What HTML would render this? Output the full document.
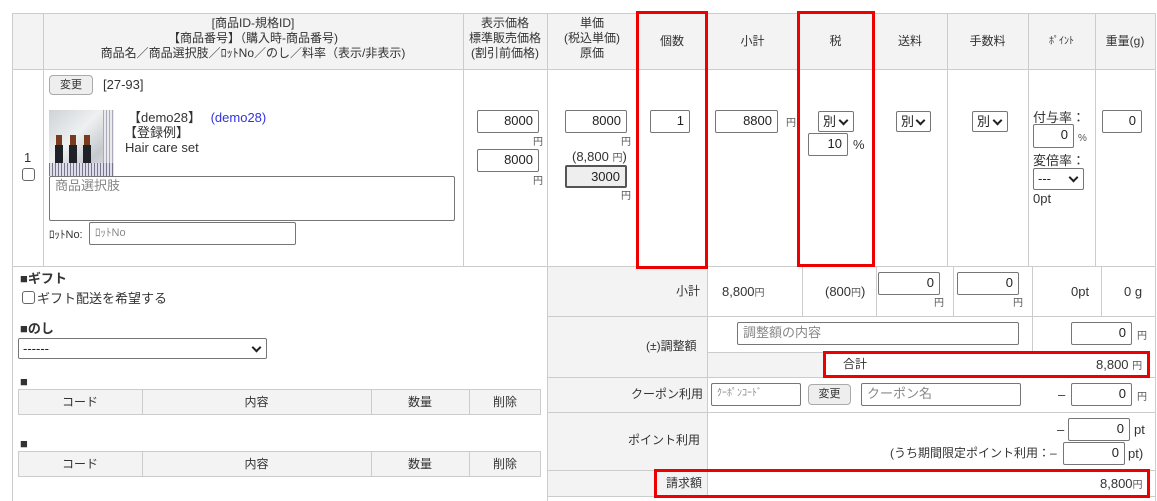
<!DOCTYPE html>
<html><head><meta charset="utf-8"><style>
*{box-sizing:border-box;margin:0;padding:0}
body{width:1157px;height:501px;background:#fff;position:relative;overflow:hidden;font-family:"Liberation Sans","Noto Sans CJK JP",sans-serif;font-size:13px;color:#333}
.a{position:absolute}
.h{position:absolute;background:#ccc}
.hd{position:absolute;background:#f2f3f2}
.t{position:absolute;white-space:nowrap;line-height:15px}
.hh{font-size:12px}
.i{position:absolute;border:1px solid #767676;border-radius:2px;background:#fff;text-align:right;padding-right:5px;font-size:13px;line-height:20px;color:#222}
.s{position:absolute;border:1px solid #767676;border-radius:2px;background:#fff;font-size:13px;line-height:19px;padding-left:4px;color:#222}
.s:after{content:"";position:absolute;right:6px;top:5px;width:5px;height:5px;border-right:2px solid #222;border-bottom:2px solid #222;transform:rotate(45deg)}
.c{text-align:center}
.r{position:absolute;border:3px solid #e00}
.y{font-size:10px;color:#555}
.ph{color:#888;text-align:left;padding-left:5px}
.cb{position:absolute;width:13px;height:13px;border:1px solid #666;border-radius:3px;background:#fff}
.btn{position:absolute;border:1px solid #aaa;border-radius:4px;background:#eee;text-align:center;font-size:11px;line-height:18px}
</style></head><body>
<div class="hd" style="left:12px;top:13px;width:1143px;height:56px"></div>
<div class="hd" style="left:547px;top:266px;width:160px;height:230px"></div>
<div class="hd" style="left:707px;top:352px;width:116px;height:25px"></div>
<div class="hd" style="left:18px;top:389px;width:523px;height:25px"></div>
<div class="hd" style="left:18px;top:451px;width:523px;height:25px"></div>
<div class="h" style="left:12px;top:13px;width:1143px;height:1px"></div>
<div class="h" style="left:12px;top:69px;width:1143px;height:1px"></div>
<div class="h" style="left:12px;top:266px;width:1143px;height:1px"></div>
<div class="h" style="left:547px;top:316px;width:608px;height:1px"></div>
<div class="h" style="left:707px;top:352px;width:325px;height:1px"></div>
<div class="h" style="left:547px;top:377px;width:608px;height:1px"></div>
<div class="h" style="left:547px;top:412px;width:608px;height:1px"></div>
<div class="h" style="left:547px;top:470px;width:608px;height:1px"></div>
<div class="h" style="left:547px;top:496px;width:608px;height:1px"></div>
<div class="h" style="left:12px;top:13px;width:1px;height:488px"></div>
<div class="h" style="left:43px;top:13px;width:1px;height:253px"></div>
<div class="h" style="left:463px;top:13px;width:1px;height:253px"></div>
<div class="h" style="left:547px;top:13px;width:1px;height:488px"></div>
<div class="h" style="left:637px;top:13px;width:1px;height:253px"></div>
<div class="h" style="left:707px;top:13px;width:1px;height:253px"></div>
<div class="h" style="left:798px;top:13px;width:1px;height:253px"></div>
<div class="h" style="left:873px;top:13px;width:1px;height:253px"></div>
<div class="h" style="left:947px;top:13px;width:1px;height:253px"></div>
<div class="h" style="left:1028px;top:13px;width:1px;height:253px"></div>
<div class="h" style="left:1095px;top:13px;width:1px;height:253px"></div>
<div class="h" style="left:1155px;top:13px;width:1px;height:488px"></div>
<div class="h" style="left:707px;top:266px;width:1px;height:230px"></div>
<div class="h" style="left:802px;top:266px;width:1px;height:50px"></div>
<div class="h" style="left:876px;top:266px;width:1px;height:50px"></div>
<div class="h" style="left:953px;top:266px;width:1px;height:50px"></div>
<div class="h" style="left:1032px;top:266px;width:1px;height:86px"></div>
<div class="h" style="left:1101px;top:266px;width:1px;height:50px"></div>
<div class="h" style="left:823px;top:352px;width:1px;height:25px"></div>
<div class="t c hh" style="left:43px;top:16px;width:420px">[商品ID-規格ID]<br>【商品番号】（購入時-商品番号)<br>商品名／商品選択肢／ﾛｯﾄNo／のし／料率（表示/非表示)</div>
<div class="t c hh" style="left:463px;top:16px;width:84px">表示価格<br>標準販売価格<br>(割引前価格)</div>
<div class="t c hh" style="left:547px;top:16px;width:90px">単価<br>(税込単価)<br>原価</div>
<div class="t c hh" style="left:637px;top:34px;width:70px">個数</div>
<div class="t c hh" style="left:707px;top:34px;width:91px">小計</div>
<div class="t c hh" style="left:798px;top:34px;width:75px">税</div>
<div class="t c hh" style="left:873px;top:34px;width:74px">送料</div>
<div class="t c hh" style="left:947px;top:34px;width:81px">手数料</div>
<div class="t c" style="left:1028px;top:34px;width:67px;font-size:10px">ﾎﾟｲﾝﾄ</div>
<div class="t c hh" style="left:1095px;top:34px;width:60px">重量(g)</div>
<div class="t" style="left:24px;top:150px">1</div>
<div class="cb" style="left:22px;top:168px"></div>
<div class="btn" style="left:49px;top:75px;width:44px;height:20px">変更</div>
<div class="t" style="left:103px;top:77px">[27-93]</div>
<div class="a" style="left:49px;top:110px;width:65px;height:66px;background:linear-gradient(135deg,#cfd3d6,#eef0f1 40%,#c5c9cc 70%,#e3e5e7)"></div>
<div class="a" style="left:103px;top:110px;width:11px;height:66px;background:repeating-linear-gradient(90deg,#aab 0 1px,#e8eaec 1px 3px)"></div>
<div class="a" style="left:49px;top:163px;width:65px;height:13px;background:repeating-linear-gradient(90deg,#778 0 1px,#dde 1px 3px)"></div>
<div class="a" style="left:55px;top:145px;width:8px;height:18px;background:#1e2226"></div>
<div class="a" style="left:69px;top:145px;width:8px;height:18px;background:#1e2226"></div>
<div class="a" style="left:83px;top:145px;width:8px;height:18px;background:#1e2226"></div>
<div class="a" style="left:56px;top:135px;width:6px;height:10px;background:#7a3a1c"></div>
<div class="a" style="left:70px;top:135px;width:6px;height:10px;background:#7a3a1c"></div>
<div class="a" style="left:84px;top:135px;width:6px;height:10px;background:#7a3a1c"></div>
<div class="t" style="left:128px;top:110px">【demo28】 <span style="color:#3333dd;margin-left:6px">(demo28)</span></div>
<div class="t" style="left:124px;top:125px">【登録例】</div>
<div class="t" style="left:125px;top:140px">Hair care set</div>
<div class="i ph" style="left:49px;top:176px;width:406px;height:45px;line-height:18px">商品選択肢</div>
<div class="t" style="left:49px;top:228px;font-size:11px">ﾛｯﾄNo:</div>
<div class="i ph" style="left:89px;top:222px;width:207px;height:23px;font-size:11px">ﾛｯﾄNo</div>
<div class="i" style="left:477px;top:110px;width:62px;height:23px">8000</div>
<div class="t y" style="left:533px;top:135px">円</div>
<div class="i" style="left:477px;top:149px;width:62px;height:23px">8000</div>
<div class="t y" style="left:533px;top:174px">円</div>
<div class="i" style="left:565px;top:110px;width:62px;height:23px">8000</div>
<div class="t y" style="left:621px;top:135px">円</div>
<div class="t" style="left:572px;top:149px">(8,800 <span class="y">円</span>)</div>
<div class="i" style="left:565px;top:165px;width:62px;height:23px;border:2px solid #555;background:#eee">3000</div>
<div class="t y" style="left:621px;top:189px">円</div>
<div class="i" style="left:650px;top:110px;width:40px;height:23px">1</div>
<div class="i" style="left:715px;top:110px;width:63px;height:23px">8800</div>
<div class="t y" style="left:786px;top:116px">円</div>
<div class="s" style="left:818px;top:111px;width:36px;height:21px">別</div>
<div class="i" style="left:808px;top:133px;width:40px;height:23px">10</div>
<div class="t" style="left:853px;top:137px">%</div>
<div class="s" style="left:896px;top:111px;width:35px;height:21px">別</div>
<div class="s" style="left:972px;top:111px;width:36px;height:21px">別</div>
<div class="t" style="left:1033px;top:110px">付与率：</div>
<div class="i" style="left:1033px;top:124px;width:41px;height:24px">0</div>
<div class="t y" style="left:1078px;top:131px">%</div>
<div class="t" style="left:1033px;top:153px">変倍率：</div>
<div class="s" style="left:1033px;top:168px;width:51px;height:22px">---</div>
<div class="t" style="left:1033px;top:191px">0pt</div>
<div class="i" style="left:1102px;top:110px;width:40px;height:23px">0</div>
<div class="t" style="left:20px;top:271px;font-weight:bold">■ギフト</div>
<div class="cb" style="left:22px;top:291px"></div>
<div class="t" style="left:37px;top:291px">ギフト配送を希望する</div>
<div class="t" style="left:20px;top:321px;font-weight:bold">■のし</div>
<div class="s" style="left:18px;top:338px;width:249px;height:21px">------</div>
<div class="t" style="left:20px;top:374px;font-weight:bold">■</div>
<div class="a" style="left:18px;top:389px;width:523px;height:26px;border:1px solid #ccc"></div>
<div class="h" style="left:142px;top:389px;width:1px;height:26px"></div>
<div class="h" style="left:371px;top:389px;width:1px;height:26px"></div>
<div class="h" style="left:469px;top:389px;width:1px;height:26px"></div>
<div class="t c hh" style="left:18px;top:395px;width:124px">コード</div>
<div class="t c hh" style="left:142px;top:395px;width:229px">内容</div>
<div class="t c hh" style="left:371px;top:395px;width:98px">数量</div>
<div class="t c hh" style="left:469px;top:395px;width:72px">削除</div>
<div class="t" style="left:20px;top:436px;font-weight:bold">■</div>
<div class="a" style="left:18px;top:451px;width:523px;height:26px;border:1px solid #ccc"></div>
<div class="h" style="left:142px;top:451px;width:1px;height:26px"></div>
<div class="h" style="left:371px;top:451px;width:1px;height:26px"></div>
<div class="h" style="left:469px;top:451px;width:1px;height:26px"></div>
<div class="t c hh" style="left:18px;top:457px;width:124px">コード</div>
<div class="t c hh" style="left:142px;top:457px;width:229px">内容</div>
<div class="t c hh" style="left:371px;top:457px;width:98px">数量</div>
<div class="t c hh" style="left:469px;top:457px;width:72px">削除</div>
<div class="t hh" style="left:676px;top:284px">小計</div>
<div class="t" style="left:722px;top:284px">8,800<span class="y">円</span></div>
<div class="t" style="left:825px;top:284px">(800<span class="y">円</span>)</div>
<div class="i" style="left:878px;top:272px;width:62px;height:23px">0</div>
<div class="t y" style="left:934px;top:296px">円</div>
<div class="i" style="left:957px;top:272px;width:62px;height:23px">0</div>
<div class="t y" style="left:1013px;top:296px">円</div>
<div class="t" style="left:1071px;top:284px">0pt</div>
<div class="t" style="left:1124px;top:284px">0 g</div>
<div class="t hh" style="left:646px;top:339px">(±)調整額</div>
<div class="i ph" style="left:737px;top:322px;width:282px;height:23px">調整額の内容</div>
<div class="i" style="left:1071px;top:322px;width:61px;height:23px">0</div>
<div class="t y" style="left:1137px;top:329px">円</div>
<div class="t hh" style="left:843px;top:357px">合計</div>
<div class="t" style="left:1096px;top:357px">8,800 <span class="y">円</span></div>
<div class="t hh" style="left:631px;top:387px">クーポン利用</div>
<div class="i ph" style="left:711px;top:383px;width:90px;height:23px;font-size:10px">ｸｰﾎﾟﾝｺｰﾄﾞ</div>
<div class="btn" style="left:808px;top:384px;width:43px;height:21px;line-height:19px">変更</div>
<div class="i ph" style="left:861px;top:383px;width:160px;height:23px">クーポン名</div>
<div class="t" style="left:1058px;top:387px">–</div>
<div class="i" style="left:1071px;top:383px;width:61px;height:23px">0</div>
<div class="t y" style="left:1137px;top:390px">円</div>
<div class="t hh" style="left:628px;top:433px">ポイント利用</div>
<div class="t" style="left:1057px;top:422px">–</div>
<div class="i" style="left:1068px;top:418px;width:62px;height:23px">0</div>
<div class="t" style="left:1134px;top:422px">pt</div>
<div class="t hh" style="left:890px;top:446px">(うち期間限定ポイント利用：–</div>
<div class="i" style="left:1063px;top:442px;width:62px;height:23px">0</div>
<div class="t" style="left:1128px;top:446px">pt)</div>
<div class="t hh" style="left:666px;top:476px">請求額</div>
<div class="t" style="left:1100px;top:476px">8,800<span class="y">円</span></div>
<div class="r" style="left:636px;top:11px;width:72px;height:258px"></div>
<div class="r" style="left:797px;top:11px;width:78px;height:256px"></div>
<div class="r" style="left:823px;top:351px;width:327px;height:27px"></div>
<div class="r" style="left:654px;top:469px;width:496px;height:29px"></div>
</body></html>
